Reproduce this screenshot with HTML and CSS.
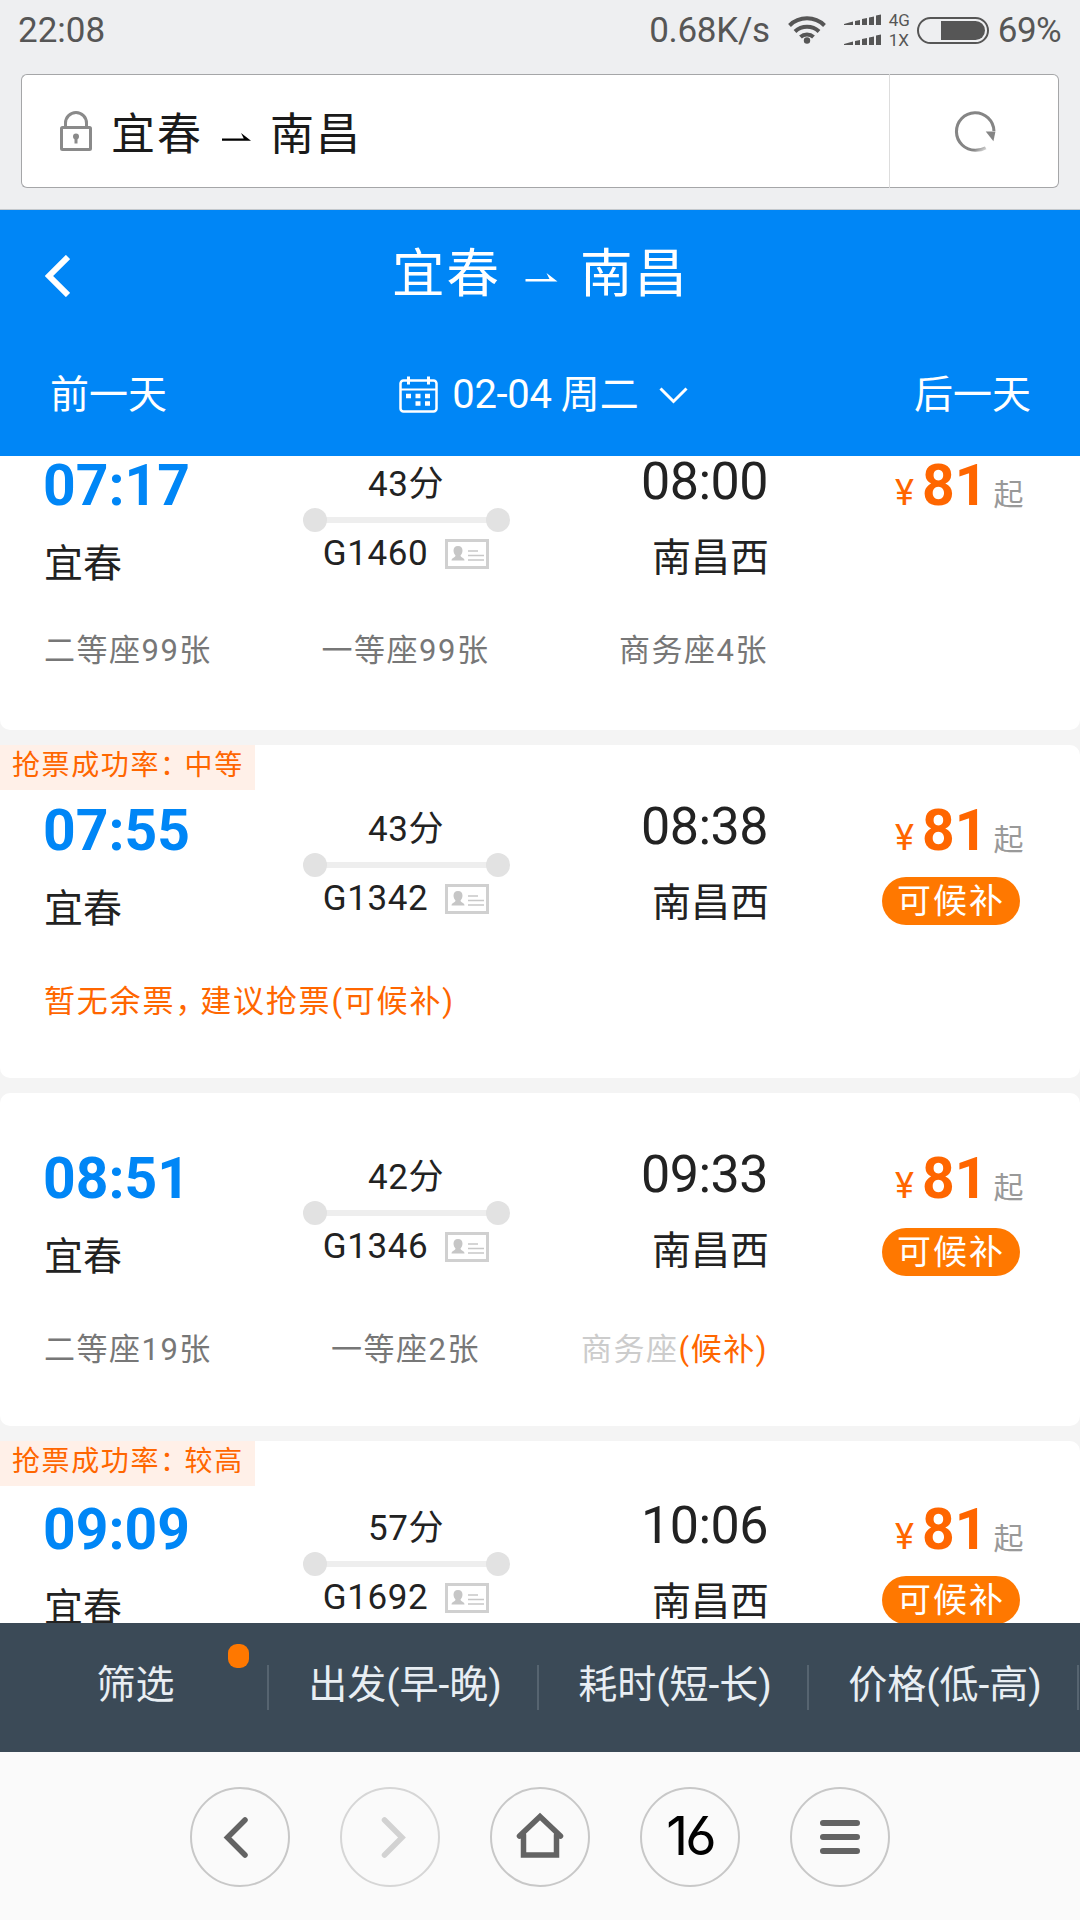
FILE: index.html
```html
<!DOCTYPE html>
<html lang="zh-CN">

<head>
  <meta charset="UTF-8">
  <meta name="viewport" content="width=device-width, initial-scale=1.0">
  <title>宜春 - 南昌</title>
  <link rel="stylesheet" href="styles.css">
</head>

<body>

  <!-- shared icons -->
  <svg class="sprite" aria-hidden="true">
    <symbol id="arrow" viewBox="0 0 32 12">
      <path d="M0 8.500H32L21 0l3 6H0z" />
    </symbol>
    <symbol id="signal" viewBox="0 0 38 12">
      <path d="M0 10l9-2.500v3.500H0zM11 7l5-1v5h-5zM18 5l5-1v7h-5zM25 3.500l5-1V11h-5zM32 1.500l5-1V11h-5z" />
    </symbol>
    <symbol id="idcard" viewBox="0 0 44 30">
      <rect x="1.500" y="1.500" width="41" height="27" fill="none" stroke="#d0d0d0" stroke-width="3" />
      <path d="M13 7c3 0 4.500 2 4.500 4.500 0 2-1 4-2 5 0 2 4 2 4 5h-13c0-3 4-3 4-5-1-1-2-3-2-5C8.500 9 10 7 13 7z" fill="#c6c6c6" />
      <path d="M23 12h10M23 16.500h16M23 21h16" stroke="#c8c8c8" stroke-width="1.600" />
    </symbol>
  </svg>

  <div class="status">
    <span class="clock">22:08</span>
    <span class="speed">0.68K/s</span>
    <svg class="wifi" viewBox="0 0 38 28">
      <g fill="none" stroke="#565656" stroke-width="4">
        <path d="M1.500 9.500a25 25 0 0 1 35 0" />
        <path d="M7 15.500a17.500 17.500 0 0 1 24 0" />
        <path d="M12.500 21a9.500 9.500 0 0 1 13 0" />
      </g>
      <circle cx="19" cy="24.500" r="3.200" fill="#565656" />
    </svg>
    <div class="signals">
      <svg><use href="#signal" /></svg>
      <svg><use href="#signal" /></svg>
    </div>
    <div class="network">
      <span>4G</span>
      <span>1X</span>
    </div>
    <div class="battery"><i></i></div>
    <span class="percent">69%</span>
  </div>

  <div class="address">
    <div class="url">
      <svg class="lock" viewBox="0 0 32 40" fill="none" stroke="#8a8a8a" stroke-width="3">
        <rect x="1.500" y="16.500" width="29" height="22" rx="1" />
        <path d="M5.500 16v-4a10.500 10.500 0 0 1 21 0v4" />
        <circle cx="16" cy="25.500" r="3" fill="#8a8a8a" stroke="none" />
        <path d="M16 26v6.500" />
      </svg>
      <span>宜春</span>
      <svg class="arrow"><use href="#arrow" /></svg>
      <span>南昌</span>
    </div>
    <div class="reload">
      <svg viewBox="0 0 42 42">
        <path d="M39 20.500A18.300 18.300 0 1 0 21 39.300Q27 39.300 31 37" fill="none" stroke="url(#fade)" stroke-width="3" />
        <path d="M31 21h9.500l-2 9.500z" fill="#858585" />
        <defs>
          <linearGradient id="fade" gradientUnits="userSpaceOnUse" x1="22" y1="30" x2="33" y2="42">
            <stop offset="0.300" stop-color="#858585" />
            <stop offset="1" stop-color="#fff" />
          </linearGradient>
        </defs>
      </svg>
    </div>
  </div>

  <header>
    <div class="title">
      <svg class="back" viewBox="0 0 25 42"><path d="M23 2L4 21l19 19" fill="none" stroke="#fff" stroke-width="6" /></svg>
      <h1>宜春 <svg class="arrow"><use href="#arrow" /></svg> 南昌</h1>
    </div>
    <div class="days">
      <span>前一天</span>
      <div class="date">
        <svg class="calendar" viewBox="0 0 39 38" fill="none" stroke="#fff" stroke-width="2.500">
          <rect x="1.500" y="4.500" width="36" height="31" rx="3" />
          <path d="M2 13.500h35" stroke-width="2" />
          <path d="M9.500 0.500v8M29.500 0.500v8" stroke-width="3" />
          <path d="M7 20h5M16.500 20h5M26 20h5M16.500 27.500h5M26 27.500h5" stroke-width="4.500" />
        </svg>
        <b>02-04</b>
        <span>周二</span>
        <svg class="down" viewBox="0 0 29 17"><path d="M1.500 1.500L14.500 14.500l13-13" fill="none" stroke="#fff" stroke-width="3" /></svg>
      </div>
      <span>后一天</span>
    </div>
  </header>

  <main>
    <section class="card first">
      <div class="info">
        <div class="from">
          <h2>07:17</h2>
          <p>宜春</p>
        </div>
        <div class="trip">
          <p>43分</p>
          <div class="track"></div>
          <p>G1460 <svg class="idcard"><use href="#idcard" /></svg></p>
        </div>
        <div class="to">
          <h3>08:00</h3>
          <p>南昌西</p>
        </div>
        <div class="price">
          <p><i>¥</i><b>81</b><span>起</span></p>
        </div>
      </div>
      <div class="seats">
        <span>二等座99张</span>
        <span>一等座99张</span>
        <span>商务座4张</span>
      </div>
    </section>

    <section class="card">
      <div class="rate">抢票成功率<i>：</i>中等</div>
      <div class="info">
        <div class="from">
          <h2>07:55</h2>
          <p>宜春</p>
        </div>
        <div class="trip">
          <p>43分</p>
          <div class="track"></div>
          <p>G1342 <svg class="idcard"><use href="#idcard" /></svg></p>
        </div>
        <div class="to">
          <h3>08:38</h3>
          <p>南昌西</p>
        </div>
        <div class="price">
          <p><i>¥</i><b>81</b><span>起</span></p>
          <div class="pill">可候补</div>
        </div>
      </div>
      <div class="soldout">暂无余票<i>，</i>建议抢票(可候补)</div>
    </section>

    <section class="card third">
      <div class="info">
        <div class="from">
          <h2>08:51</h2>
          <p>宜春</p>
        </div>
        <div class="trip">
          <p>42分</p>
          <div class="track"></div>
          <p>G1346 <svg class="idcard"><use href="#idcard" /></svg></p>
        </div>
        <div class="to">
          <h3>09:33</h3>
          <p>南昌西</p>
        </div>
        <div class="price">
          <p><i>¥</i><b>81</b><span>起</span></p>
          <div class="pill">可候补</div>
        </div>
      </div>
      <div class="seats">
        <span>二等座19张</span>
        <span>一等座2张</span>
        <span class="none">商务座<em>(候补)</em></span>
      </div>
    </section>

    <section class="card last">
      <div class="rate">抢票成功率<i>：</i>较高</div>
      <div class="info">
        <div class="from">
          <h2>09:09</h2>
          <p>宜春</p>
        </div>
        <div class="trip">
          <p>57分</p>
          <div class="track"></div>
          <p>G1692 <svg class="idcard"><use href="#idcard" /></svg></p>
        </div>
        <div class="to">
          <h3>10:06</h3>
          <p>南昌西</p>
        </div>
        <div class="price">
          <p><i>¥</i><b>81</b><span>起</span></p>
          <div class="pill">可候补</div>
        </div>
      </div>
    </section>
  </main>

  <div class="filters">
    <div class="active">筛选</div>
    <div>出发(早-晚)</div>
    <div>耗时(短-长)</div>
    <div>价格(低-高)</div>
  </div>

  <nav>
    <div class="btn">
      <svg viewBox="0 0 50 50"><path d="M30 8L12.500 25.500 30 43" /></svg>
    </div>
    <div class="btn disabled">
      <svg viewBox="0 0 50 50"><path d="M19.500 8L37 25.500 19.500 43" /></svg>
    </div>
    <div class="btn">
      <svg viewBox="0 0 50 50"><path d="M4.500 24L25 4.500 45.500 24M8.500 23v20h33V23" /></svg>
    </div>
    <div class="btn tabs">16</div>
    <div class="btn">
      <svg viewBox="0 0 50 50"><path d="M8 11h34M8 25h34M8 39h34" stroke-width="6" /></svg>
    </div>
  </nav>

</body>

</html>
```
FILE: styles.css
```css
* {
  margin: 0;
  padding: 0;
  box-sizing: border-box;
  font-style: normal;

  --blue: #0086f6;
  --orange: #ff6600;
}

body {
  width: 1080px;
  height: 1920px;
  overflow: hidden;
  display: flex;
  flex-direction: column;
  background-color: #f4f4f4;
  color: #222;
  font-family: Roboto, "Noto Sans CJK SC", sans-serif;
}

svg {
  display: block;
}

.sprite {
  display: none;
}

/* phone status bar */
.status {
  height: 74px;
  padding: 0 19px 14px 18px;
  display: flex;
  align-items: center;
  background-color: #eeeff1;
  color: #565656;
  font-size: 35px;
}

.speed {
  margin-left: auto;
  letter-spacing: -0.3px;
}

.wifi {
  width: 38px;
  height: 28px;
  margin-left: 18px;
}

.signals {
  margin-left: 18px;
  display: flex;
  flex-direction: column;
  gap: 8px;
}

.signals svg {
  width: 38px;
  height: 12px;
  fill: #565656;
}

.network {
  width: 28px;
  margin-left: 7px;
  display: flex;
  flex-direction: column;
  font-size: 17px;
  line-height: 20px;
}

.battery {
  width: 72px;
  height: 27px;
  padding: 2px 2px 2px 22px;
  border: 2px solid #565656;
  border-radius: 14px;
}

.battery i {
  display: block;
  height: 100%;
  background-color: #565656;
  border-radius: 0 10px 10px 0;
}

.percent {
  margin-left: 9px;
  letter-spacing: -0.6px;
}

/* address bar */
.address {
  height: 136px;
  padding: 0 21px 21px;
  display: flex;
  background-color: #eeeff1;
  border-bottom: 1px solid #c4c8cc;
}

.url,
.reload {
  display: flex;
  align-items: center;
  background-color: #fff;
  border: 1px solid #a5a6a8;
}

.url {
  flex: 1;
  padding: 0 38px;
  border-right-color: #ddd;
  border-radius: 6px 0 0 6px;
  font-size: 44px;
  letter-spacing: 2px;
  color: #1a1a1a;
}

.lock {
  width: 32px;
  height: 40px;
  margin-right: 19px;
}

.url .arrow {
  width: 29px;
  height: 11px;
  margin: 15px 19px 0 19px;
}

.reload {
  width: 169px;
  padding-left: 2px;
  justify-content: center;
  border-left: none;
  border-radius: 0 6px 6px 0;
}

.reload svg {
  width: 43px;
  height: 43px;
}

/* page header */
header {
  height: 246px;
  background-color: var(--blue);
  color: #fff;
}

.title {
  height: 132px;
  padding-left: 45px;
  display: flex;
  align-items: center;
}

.back {
  width: 25px;
  height: 42px;
}

.title h1 {
  flex: 1;
  padding: 0 69px 15px 0;
  display: flex;
  justify-content: center;
  align-items: center;
  font-size: 52.5px;
  font-weight: normal;
  letter-spacing: 2px;
}

.title .arrow {
  width: 33px;
  height: 12px;
  margin: 20px 22px 0 24px;
  fill: #fff;
}

.days {
  padding: 23px 49px 0 50px;
  display: flex;
  justify-content: space-between;
  align-items: center;
  font-size: 39px;
  line-height: 60px;
}

.date {
  padding-left: 6px;
  display: flex;
  align-items: center;
}

.date b {
  margin: 0 9px 0 14px;
  font-size: 40px;
  font-weight: normal;
  letter-spacing: -0.3px;
}

.calendar {
  width: 39px;
  height: 38px;
}

.down {
  width: 29px;
  height: 17px;
  margin-left: 20px;
}

/* train list */
main {
  flex: 1;
  overflow: hidden;
  display: flex;
  flex-direction: column;
  gap: 15px;
}

.card {
  position: relative;
  flex: none;
  height: 333px;
  padding: 50px 0 0 44px;
  background-color: #fff;
  border-radius: 10px;
}

/* the list is scrolled a little */
.card.first {
  height: 330px;
  margin-top: -56px;
}

.card.last {
  padding-top: 53px;
}

.rate {
  position: absolute;
  left: 0;
  top: 0;
  width: 255px;
  height: 45px;
  padding-left: 12px;
  background-color: #fff0e8;
  color: var(--orange);
  font-size: 28px;
  line-height: 42px;
  letter-spacing: 1.6px;
  white-space: nowrap;
}

.rate i {
  letter-spacing: -3.5px;
}

.soldout i {
  letter-spacing: -6px;
}

.info,
.seats {
  display: grid;
  grid-template-columns: 259px 207px 259px 1fr;
}

.info {
  height: 140px;
}

.from {
  padding-top: 6px;
}

.from h2 {
  margin-left: -1px;
  color: var(--blue);
  font-size: 57px;
  line-height: 60px;
}

.from p,
.to p {
  font-size: 39px;
  line-height: 50px;
}

.from p {
  margin-top: 23px;
}

.trip {
  padding-top: 14px;
  font-size: 35px;
  line-height: 42px;
  text-align: center;
}

.trip p {
  display: flex;
  justify-content: center;
  align-items: center;
  padding-right: 1px;
  letter-spacing: 0.6px;
}

.track {
  height: 24px;
  margin: 2px 0 1px;
  display: flex;
  align-items: center;
  justify-content: space-between;
  background: linear-gradient(#eee, #eee) center / 190px 6px no-repeat;
}

.track::before,
.track::after {
  content: "";
  width: 24px;
  height: 24px;
  background-color: #e2e2e2;
  border-radius: 50%;
}

.idcard {
  width: 44px;
  height: 30px;
  margin-left: 17px;
}

.to {
  padding-top: 2px;
  text-align: right;
}

.to h3 {
  padding-right: 1px;
  font-size: 52px;
  font-weight: normal;
  line-height: 60px;
  letter-spacing: -0.5px;
}

.to p {
  margin-top: 21px;
}

.price {
  padding: 6px 0 0 113px;
}

.price p {
  height: 60px;
  padding-left: 13px;
  display: flex;
  align-items: baseline;
  color: var(--orange);
  line-height: 60px;
}

.price i {
  width: 21px;
  font-size: 36px;
}

.price b {
  margin-left: 6px;
  font-size: 57px;
}

.price span {
  margin-left: 6px;
  color: #999;
  font-size: 30px;
}

.pill {
  width: 138px;
  height: 48px;
  margin-top: 16px;
  background-color: #ff7800;
  border-radius: 24px;
  color: #fff;
  font-size: 34px;
  line-height: 48px;
  letter-spacing: 2px;
  text-align: center;
}

.third .pill {
  margin-top: 19px;
}

.seats {
  margin-top: 41px;
  color: #777;
  font-size: 31px;
  line-height: 40px;
  letter-spacing: 1.5px;
}

.third .seats {
  margin-top: 47px;
}

.seats span:nth-child(2) {
  padding-right: 2px;
  text-align: center;
}

.seats span:nth-child(3) {
  padding-right: 1px;
  text-align: right;
}

.seats .none {
  color: #ccc;
}

.seats em,
.soldout {
  color: var(--orange);
}

.soldout {
  margin-top: 47px;
  font-size: 31px;
  line-height: 40px;
  letter-spacing: 1.8px;
}

/* sorting */
.filters {
  height: 129px;
  display: grid;
  grid-template-columns: 269px 270px 270px 270px;
  align-items: center;
  background-color: #3b4a57;
  color: #e8eef3;
  font-size: 39px;
}

.filters div {
  position: relative;
  height: 45px;
  padding-left: 4px;
  line-height: 41px;
  text-align: center;
  border-right: 2px solid #566470;
}

.filters .active::after {
  content: "";
  position: absolute;
  right: 18px;
  top: -21px;
  width: 21px;
  height: 24px;
  background-color: #ff7800;
  border-radius: 9px;
}

/* browser buttons */
nav {
  height: 168px;
  padding-top: 2px;
  display: flex;
  justify-content: center;
  align-items: center;
  gap: 50px;
  background-color: #fafafa;
}

.btn {
  width: 100px;
  height: 100px;
  display: grid;
  place-content: center;
  border: 2px solid #c8c8c8;
  border-radius: 50%;
}

.btn svg {
  width: 50px;
  height: 50px;
  fill: none;
  stroke: #636363;
  stroke-width: 5.5;
  stroke-linecap: round;
}

.btn.disabled {
  border-color: #d6d6d6;
}

.btn.disabled svg {
  stroke: #d2d2d2;
}

.tabs {
  padding-bottom: 4px;
  color: #000;
  font-family: Inter, sans-serif;
  font-feature-settings: "ss01";
  font-size: 54px;
  font-weight: 400;
  letter-spacing: -3px;
}
```
